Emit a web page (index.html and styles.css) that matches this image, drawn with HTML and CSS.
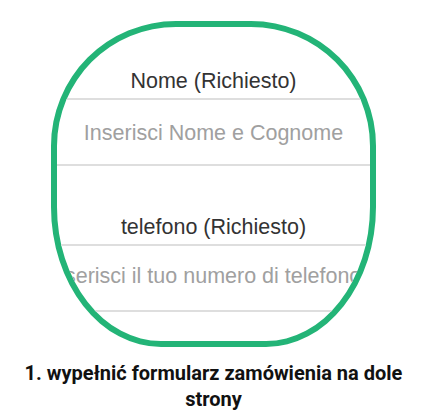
FILE: index.html
```html
<!DOCTYPE html>
<html lang="pl">
<head>
<meta charset="utf-8">
<title>Formularz</title>
<link rel="stylesheet" href="styles.css">
</head>
<body>
<div class="page">
  <div class="frame">
    <form class="form">
      <div class="field">
        <label class="label" for="nome">Nome (Richiesto)</label>
        <input class="input" id="nome" type="text" placeholder="Inserisci Nome e Cognome">
      </div>
      <div class="field">
        <label class="label" for="tel">telefono (Richiesto)</label>
        <input class="input input-long" id="tel" type="tel" placeholder="Inserisci il tuo numero di telefono">
      </div>
    </form>
  </div>
  <p class="caption">1. wypełnić formularz zamówienia na dole strony</p>
</div>
</body>
</html>
```

FILE: styles.css
```css
html, body {
  margin: 0;
  padding: 0;
  background: #ffffff;
}

.page {
  width: 427px;
  padding-top: 21px;
  display: flex;
  flex-direction: column;
  align-items: center;
}

.frame {
  box-sizing: border-box;
  width: 325px;
  height: 326px;
  border: 6px solid #23b477;
  border-radius: 125px 125px 110px 110px / 125px 125px 140px 140px;
  overflow: hidden;
  background: #ffffff;
}

.form {
  display: flex;
  flex-direction: column;
  gap: 49px;
  padding-top: 42px;
  margin: 0;
}

.field {
  display: flex;
  flex-direction: column;
  gap: 5px;
}

.label {
  display: block;
  text-align: center;
  font-family: "Liberation Sans", Arial, sans-serif;
  font-size: 21.5px;
  line-height: 24px;
  color: #333333;
}

.input {
  box-sizing: border-box;
  width: 100%;
  height: 68px;
  margin: 0;
  padding: 3px 0 0 0;
  border: 0;
  border-top: 2px solid #dedede;
  border-bottom: 2px solid #dedede;
  background: transparent;
  outline: none;
  text-align: center;
  font-family: "Liberation Sans", Arial, sans-serif;
  font-size: 21.5px;
  color: #333333;
}

.input::placeholder {
  color: #a0a0a0;
  opacity: 1;
}

.input-long {
  text-align: left;
  text-indent: -10px;
  padding-top: 0;
  padding-bottom: 3px;
}

.caption {
  margin: 13px 0 0 0;
  padding: 0 15px;
  text-align: center;
  font-family: Roboto, "Noto Sans", sans-serif;
  font-weight: 700;
  font-size: 20px;
  line-height: 26px;
  color: #111111;
}
```
